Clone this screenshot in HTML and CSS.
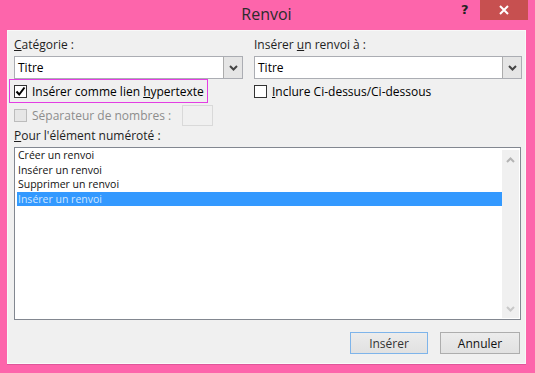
FILE: index.html
```html
<!DOCTYPE html>
<html lang="fr">
<head>
    <meta charset="UTF-8">
    <title>Renvoi</title>
    <link rel="stylesheet" href="styles.css">
</head>
<body>
    <div class="window">
        <div class="titlebar">
            <span class="title">Renvoi</span>
            <span class="help">?</span>
            <span class="close">
                <svg width="10" height="10" viewBox="0 0 10 10"><path d="M1 1 L9 9 M9 1 L1 9" stroke="#fff" stroke-width="2"/></svg>
            </span>
        </div>

        <div class="panel">
            <div class="top-grid">
                <div class="col">
                    <label class="field-label"><u>C</u>atégorie :</label>
                    <div class="combo">
                        <span class="combo-value">Titre</span>
                        <span class="combo-btn">
                            <svg width="9" height="6" viewBox="0 0 9 6"><path d="M1 1 L4.5 4.5 L8 1" fill="none" stroke="#444" stroke-width="2"/></svg>
                        </span>
                    </div>
                    <div class="check-row highlight">
                        <span class="box">
                            <svg width="11" height="11" viewBox="0 0 11 11"><path d="M1.5 5.5 L4.2 8.5 L9.5 1.5" fill="none" stroke="#000" stroke-width="2"/></svg>
                        </span>
                        <span>Insérer comme lien <u>h</u>ypertexte</span>
                    </div>
                    <div class="check-row disabled">
                        <span class="box"></span>
                        <span>Séparateur de nombres :</span>
                        <span class="small-input"></span>
                    </div>
                </div>
                <div class="col">
                    <label class="field-label">Insérer <u>u</u>n renvoi à :</label>
                    <div class="combo">
                        <span class="combo-value">Titre</span>
                        <span class="combo-btn">
                            <svg width="9" height="6" viewBox="0 0 9 6"><path d="M1 1 L4.5 4.5 L8 1" fill="none" stroke="#444" stroke-width="2"/></svg>
                        </span>
                    </div>
                    <div class="check-row">
                        <span class="box"></span>
                        <span><u>I</u>nclure Ci-dessus/Ci-dessous</span>
                    </div>
                </div>
            </div>

            <label class="field-label list-label"><u>P</u>our l'élément numéroté :</label>
            <div class="listbox">
                <ul class="items">
                    <li>Créer un renvoi</li>
                    <li>Insérer un renvoi</li>
                    <li>Supprimer un renvoi</li>
                    <li class="selected">Insérer un renvoi</li>
                </ul>
                <div class="scrollbar">
                    <svg width="9" height="6" viewBox="0 0 9 6"><path d="M1 5 L4.5 1.5 L8 5" fill="none" stroke="#b4b4b4" stroke-width="2"/></svg>
                    <svg width="9" height="6" viewBox="0 0 9 6"><path d="M1 1 L4.5 4.5 L8 1" fill="none" stroke="#c8c8c8" stroke-width="2"/></svg>
                </div>
            </div>

            <div class="buttons">
                <button class="btn default">Insérer</button>
                <button class="btn">Annuler</button>
            </div>
        </div>
    </div>
</body>
</html>
```

FILE: styles.css
```css
* {
    box-sizing: border-box;
    margin: 0;
    padding: 0;
}

body {
    background-color: #fd65ab;
    font-family: "Open Sans", "Noto Sans", sans-serif;
    font-size: 12px;
    color: #000;
    width: 535px;
    height: 373px;
    overflow: hidden;
}

.window {
    padding: 0 9px 9px 7px;
}

.titlebar {
    height: 30px;
    position: relative;
    display: flex;
    justify-content: center;
    align-items: center;
}

.title {
    font-size: 16px;
    color: #2b2b2b;
    margin-top: -2px;
}

.help {
    position: absolute;
    left: 454px;
    top: 2px;
    font-family: "DejaVu Sans", sans-serif;
    font-weight: bold;
    font-size: 13px;
    color: #222;
}

.close {
    position: absolute;
    left: 473px;
    top: 0;
    width: 48px;
    height: 20px;
    background-color: #c75050;
    display: flex;
    justify-content: center;
    align-items: center;
}

.panel {
    background-color: #f0f0f0;
    border: 1px solid #f8f8f8;
    border-bottom-color: #fafafa;
    height: 334px;
    padding: 6px 3px 0 6px;
    display: flex;
    flex-direction: column;
    box-shadow: 0 1px 0 #e0559a;
}

.top-grid {
    display: grid;
    grid-template-columns: 229px 268px;
    column-gap: 11px;
}

.col {
    display: flex;
    flex-direction: column;
}

.field-label {
    display: block;
    height: 16px;
    line-height: 16px;
    color: #1e1e1e;
}

.combo {
    margin-top: 3px;
    height: 23px;
    background-color: #fff;
    border: 1px solid #abadb3;
    display: flex;
    align-items: center;
}

.combo-value {
    flex: 1;
    padding-left: 3px;
}

.combo-btn {
    width: 19px;
    height: 21px;
    background-color: #e5e5e5;
    border-left: 1px solid #acacac;
    display: flex;
    justify-content: center;
    align-items: center;
}

.check-row {
    height: 24px;
    display: flex;
    align-items: center;
    gap: 5px;
}

.check-row .box {
    width: 13px;
    height: 13px;
    border: 1px solid #333;
    background-color: #fff;
    display: flex;
    justify-content: center;
    align-items: center;
}

.highlight {
    border: 1px solid #e33ee3;
    margin-left: -5px;
    padding-left: 4px;
    width: 199px;
}

.disabled {
    margin-top: 2px;
    height: 21px;
    color: #8d8d8d;
}

.disabled .box {
    border-color: #bcbcbc;
    background-color: #e6e6e6;
}

.small-input {
    width: 31px;
    height: 21px;
    border: 1px solid #d9d9d9;
    margin-left: 6px;
}

.list-label {
    margin-top: 2px;
}

.listbox {
    margin-top: 3px;
    height: 173px;
    margin-right: 1px;
    background-color: #fff;
    border: 1px solid #828790;
    display: flex;
    padding: 0 1px 1px 2px;
}

.items {
    list-style: none;
    flex: 1;
    font-size: 10.5px;
}

.items li {
    height: 14.5px;
    line-height: 14.5px;
    padding-left: 1px;
    color: #111;
}

.items li.selected {
    background-color: #3399ff;
    color: #cfe6ff;
}

.scrollbar {
    width: 17px;
    margin-top: 2px;
    background-color: #f0f0f0;
    display: flex;
    flex-direction: column;
    justify-content: space-between;
    align-items: center;
    padding: 7px 0 6px;
}

.buttons {
    display: flex;
    justify-content: flex-end;
    gap: 12px;
    margin-top: 12px;
    padding-right: 2px;
}

.btn {
    font-family: inherit;
    font-size: 12px;
    height: 22px;
    background: linear-gradient(#ececec, #e1e1e1);
    border: 1px solid #adadad;
    color: #111;
    width: 80px;
}

.btn.default {
    width: 78px;
    border-color: #7eb4ea;
    color: #333;
}
```
